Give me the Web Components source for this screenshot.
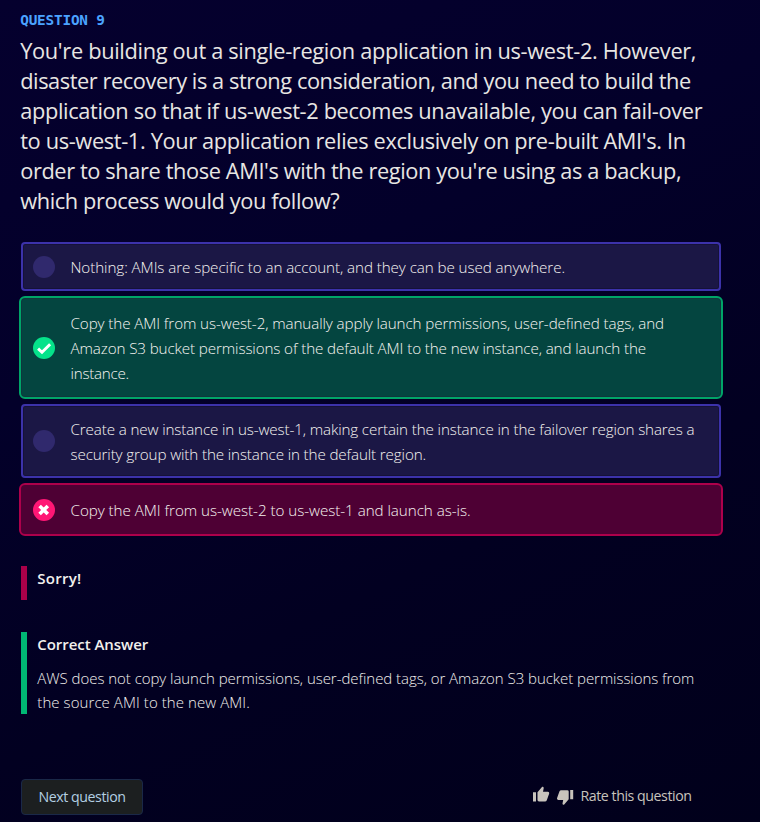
<!DOCTYPE html>
<html lang="en">
<head>
<meta charset="utf-8">
<title>Question 9</title>
<style>
html,body{margin:0;padding:0;height:822px;overflow:hidden;background:#02001f}
</style>
</head>
<body>
<quiz-page></quiz-page>
<script>
const define = (name, html, ready) => customElements.define(name, class extends HTMLElement {
  connectedCallback() {
    if (this.shadowRoot) return;
    const t = document.createElement('template');
    t.innerHTML = html;
    this.attachShadow({mode: 'open'}).append(t.content.cloneNode(true));
    if (ready) ready(this);
  }
});

// One line of copy, tracked so that it fills the width in its "w" attribute.
define('text-line', `<style>
:host{display:block;white-space:nowrap}
span{display:inline-block;white-space:nowrap}
</style><span><slot></slot></span>`, el => {
  const s = el.shadowRoot.querySelector('span');
  const w = parseFloat(el.getAttribute('w'));
  const n = el.textContent.length;
  s.style.letterSpacing = ((w - s.getBoundingClientRect().width) / n).toFixed(4) + 'px';
});

define('quiz-heading', `<style>
:host{display:block;height:226px;color:#e8e6e3;font-size:21.8px;line-height:30px}
.label{font:bold 14.4px/18px "DejaVu Sans Mono",monospace;color:#4ba3ff;padding:11px 0 7px}
</style><div class="label"><slot name="label"></slot></div><slot></slot>`);

define('answer-option', `<style>
:host{display:flex;align-items:center;box-sizing:border-box;height:var(--h);margin:0 2px;padding:0 10px;gap:15.5px;
 border:2px solid #3c32aa;border-radius:4px;background:#1b1745;box-shadow:inset 0 0 0 1px #151238;color:#f6f4f1;
 font-size:15.2px;line-height:25px;font-weight:340}
:host([state]){margin:0;padding:0 12px;border-radius:6px}
:host([state=right]){border-color:#00a468;background:#044540;box-shadow:inset 0 0 0 1px #10363d}
:host([state=wrong]){border-color:#ad004b;background:#4e0034;box-shadow:none}
svg{display:none;flex:none;width:22px;height:22px;margin-top:.5px}
:host([state=right]) .right,:host([state=wrong]) .wrong,:host(:not([state])) .none{display:block}
div{padding-top:1px}
</style>
<svg class="none" viewBox="0 0 22 22"><circle cx="11" cy="11" r="11" fill="#30296d"/></svg>
<svg class="right" viewBox="0 0 22 22"><circle cx="11" cy="11" r="11" fill="#05e28a"/><path d="M5.1 11.6 9 15.3 17.1 7.3" fill="none" stroke="#fff" stroke-width="2.9"/></svg>
<svg class="wrong" viewBox="0 0 22 22"><circle cx="11" cy="11" r="11" fill="#ff1675"/><path d="M6.6 6.9 14.8 15.1M14.8 6.9 6.6 15.1" fill="none" stroke="#fff" stroke-width="3.6"/></svg>
<div><slot></slot></div>`);

define('answer-note', `<style>
:host{display:block;box-sizing:border-box;margin-left:2px;border-left:6px solid var(--bar);padding-left:10.3px;height:var(--h);
 color:#f2f0ed;font-size:15px;line-height:24.4px;font-weight:340}
.title{font-weight:600;line-height:24px;height:34px}
</style><div class="title"><slot name="title"></slot></div><slot></slot>`);

define('next-button', `<style>
:host{display:block}
button{display:flex;align-items:center;justify-content:center;box-sizing:border-box;width:122px;height:36px;padding:0 0 1px;
 border:1px solid #1a2848;border-radius:4px;background:#1c1f20;color:#b3cfe3;font:inherit;font-size:14.2px;line-height:20px}
</style><button><slot></slot></button>`);

define('rate-question', `<style>
:host{display:flex;align-items:flex-start;color:#c8c3bc;font-size:14.2px;line-height:20px}
svg{width:17px;height:16px;fill:#c8c3bc;flex:none}
.up{margin-right:7px}.down{margin:4px 6.5px 0 0}
</style>
<svg class="up" viewBox="0 0 17 16"><path d="M0 6.3H3V15.5H0ZM4.5 6.3 9.2 .8 Q10.8 .5 10.7 2.2L10 5.7H15Q16.4 5.9 16.2 7.4L13.8 14.2Q13.3 15.4 12 15.4H6Q4.5 15.4 4.5 14Z"/></svg>
<svg class="down" viewBox="0 0 17 16"><path d="M16.2 9.3H13.2V.1H16.2ZM11.7 9.3 7 14.8Q5.4 15.1 5.5 13.4L6.2 9.9H1.2Q-.2 9.7 0 8.2L2.4 1.4Q2.9 .2 4.2 .2H10.2Q11.7 .2 11.7 1.6Z"/></svg>
<slot></slot>`);

define('quiz-page', `<style>
:host{display:block;box-sizing:border-box;width:760px;height:822px;padding:0 37px 0 19px;
 background:linear-gradient(155deg,#05002e 0%,#03002a 35%,#020021 65%,#01001b 100%);
 font-family:"Open Sans","Noto Sans",sans-serif}
quiz-heading{margin-left:1.2px}
.options{display:grid;gap:5px;padding-top:16px}
.notes{display:grid;gap:32px;padding-top:30px}
footer{display:flex;justify-content:space-between;padding:65px 31.5px 0 2px}
rate-question{padding-top:7px}
</style>
<quiz-heading>
<text-line slot="label" w="84.5">QUESTION 9</text-line>
<text-line w="676">You're building out a single-region application in us-west-2. However,</text-line>
<text-line w="670.5">disaster recovery is a strong consideration, and you need to build the</text-line>
<text-line w="682">application so that if us-west-2 becomes unavailable, you can fail-over</text-line>
<text-line w="665.5">to us-west-1. Your application relies exclusively on pre-built AMI's. In</text-line>
<text-line w="661">order to share those AMI's with the region you're using as a backup,</text-line>
<text-line w="319">which process would you follow?</text-line>
</quiz-heading>
<div class="options">
<answer-option style="--h:49px"><text-line w="494.5">Nothing: AMIs are specific to an account, and they can be used anywhere.</text-line></answer-option>
<answer-option state="right" style="--h:103px"><text-line w="593.5">Copy the AMI from us-west-2, manually apply launch permissions, user-defined tags, and</text-line><text-line w="575.5">Amazon S3 bucket permissions of the default AMI to the new instance, and launch the</text-line><text-line w="58.5">instance.</text-line></answer-option>
<answer-option style="--h:74px"><text-line w="624">Create a new instance in us-west-1, making certain the instance in the failover region shares a</text-line><text-line w="355.5">security group with the instance in the default region.</text-line></answer-option>
<answer-option state="wrong" style="--h:53px"><text-line w="400">Copy the AMI from us-west-2 to us-west-1 and launch as-is.</text-line></answer-option>
</div>
<div class="notes">
<answer-note style="--bar:#aa0049;--h:34px"><text-line slot="title" w="44">Sorry!</text-line></answer-note>
<answer-note style="--bar:#00b874;--h:82px"><text-line slot="title" w="111">Correct Answer</text-line><text-line w="657">AWS does not copy launch permissions, user-defined tags, or Amazon S3 bucket permissions from</text-line><text-line w="212.5">the source AMI to the new AMI.</text-line></answer-note>
</div>
<footer>
<next-button><text-line w="87">Next question</text-line></next-button>
<rate-question><text-line w="111">Rate this question</text-line></rate-question>
</footer>`);
</script>
</body>
</html>
